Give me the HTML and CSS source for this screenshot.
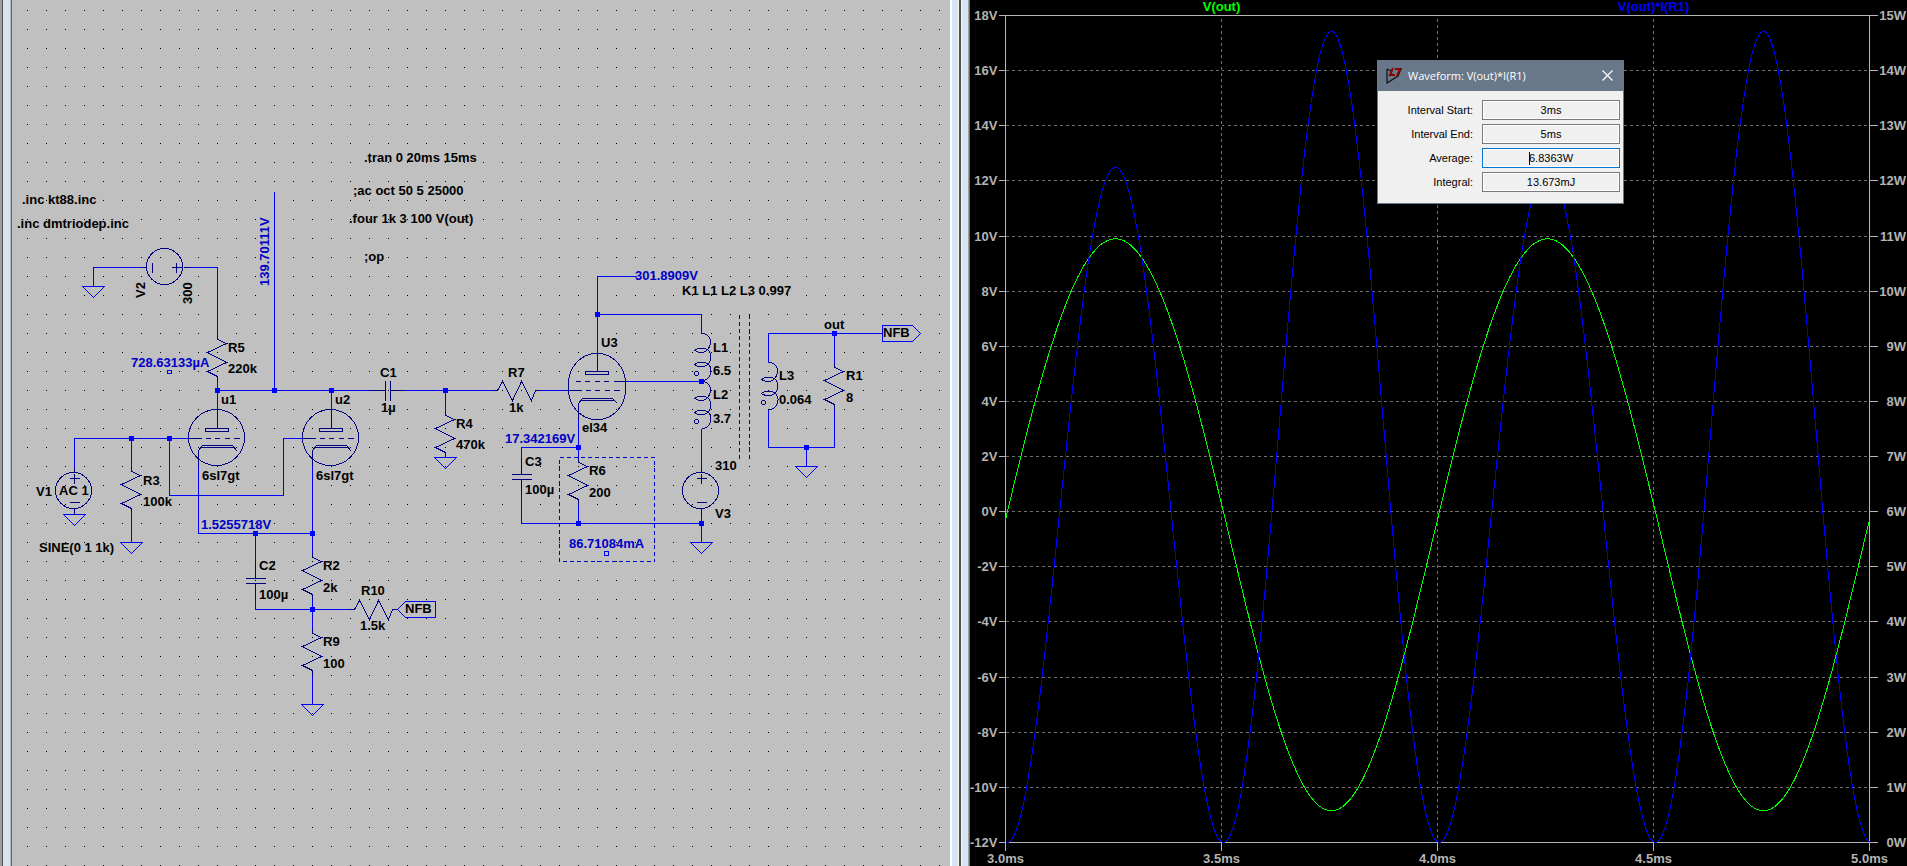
FILE: index.html
```html
<!DOCTYPE html>
<html lang="en">
<head>
  <meta charset="utf-8">
  <title>LTspice - push pull driver</title>
  <link rel="stylesheet" href="styles.css">
</head>
<body>
<main class="workspace">
  <section class="window" aria-label="Schematic">
    <div class="edge edge-left"></div>
    <svg class="schematic">
      <defs>
        <pattern id="dots" x="15" y="10" width="19" height="19" patternUnits="userSpaceOnUse">
          <rect width="1" height="1" fill="#000"/>
        </pattern>
        <g id="res"><path d="M0 -5V0L9 4L-10 13L9 23L-10 32L0 37V42"/></g>
        <g id="resh"><path d="M-5 0H0L5 -9L15 10L24 -9L34 10L38 0H43"/></g>
        <g id="gnd"><path d="M-11 0H11L0 11Z"/></g>
        <g id="cap"><path d="M0 -17V0M-10 0H10M-10 5H10M0 5V20"/></g>
        <g id="ind">
          <path d="M0 0C6 0 9 4 9 9C9 14 5 19 0 19C-3 19 -5 18 -7 17C-4 14 4 14 7 17C10 20 10 28 6 31C3 34 -3 34 -7 31C-4 28 4 28 7 31C12 36 9 47 0 47"/>
          <circle cx="-5" cy="40" r="2"/>
        </g>
        <g id="src">
          <circle cx="-1" r="18"/>
          <path d="M0 -24V-19M0 18V24M-5 -12H5M0 -17V-7M-5 12H5"/>
        </g>
        <g id="triode">
          <circle cx="-1" r="28"/>
          <path d="M0 -28V-9M-12 -9H11V-6H-12Z"/>
          <path d="M-29 1H-16M-12 1H-7M-3 1H2M7 1H12M16 1H22"/>
          <path d="M-19 28V13L-15 8H15L20 14M-17 10H17"/>
        </g>
      </defs>
      <rect width="100%" height="100%" fill="url(#dots)"/>

      <!-- window starts 12px in, half pixel keeps 1px lines sharp -->
      <g transform="translate(-11.5 .5)">
        <g class="wire">
          <path d="M93 286V267H142M188 267H217V334M274 191V390M217 381V409M217 390H369M405 390H492M540 390H568M331 390V409"/>
          <path d="M74 466V438H188M131 438V466M131 513V542M169 438V495H283V438H302"/>
          <path d="M198 465V533H312M312 465V552M255 533V561M255 598V609H350M312 599V628M312 675V704"/>
          <path d="M445 390V410M597 353V276H636M597 314H701V333M626 381H701M701 428V466M578 418V457"/>
          <path d="M578 447H521V457M521 494V523H701M578 504V523M701 514V542"/>
          <path d="M768 362V333H882M834 333V362M834 409V447H768V409M806 447V466"/>
          <path d="M397 609L405 601H435V617H405ZM882 325H912L920 333L912 341H882Z"/>
          <rect x="167" y="370" width="4" height="3"/>
          <rect x="604" y="551" width="4" height="4"/>
          <use href="#gnd" x="93" y="286"/>
          <use href="#gnd" x="74" y="514"/>
          <use href="#gnd" x="131" y="542"/>
          <use href="#gnd" x="312" y="704"/>
          <use href="#gnd" x="445" y="457"/>
          <use href="#gnd" x="701" y="542"/>
          <use href="#gnd" x="806" y="466"/>
        </g>

        <g class="part">
          <use href="#src" transform="translate(164 267) rotate(90)"/>
          <use href="#src" x="74" y="490"/>
          <use href="#src" x="701" y="490"/>
          <use href="#res" x="217" y="339"/>
          <use href="#res" x="131" y="471"/>
          <use href="#res" x="312" y="557"/>
          <use href="#res" x="312" y="633"/>
          <use href="#res" x="445" y="415"/>
          <use href="#res" x="578" y="462"/>
          <use href="#res" x="834" y="367"/>
          <use href="#resh" x="497" y="390"/>
          <use href="#resh" x="354" y="609"/>
          <use href="#cap" x="255" y="578"/>
          <use href="#cap" x="521" y="474"/>
          <use href="#cap" transform="translate(385 390) rotate(-90)"/>
          <use href="#ind" x="701" y="333"/>
          <use href="#ind" x="701" y="381"/>
          <use href="#ind" x="768" y="362"/>
          <use href="#triode" x="217" y="437"/>
          <use href="#triode" x="331" y="437"/>
          <!-- U3 pentode -->
          <rect x="568" y="353" width="57" height="66" rx="28" ry="30"/>
          <path d="M597 353V371M585 371H608V374H585Z"/>
          <path d="M575 381H580M584 381H589M594 381H599M603 381H608M613 381H626"/>
          <path d="M568 390H581M585 390H590M594 390H599M604 390H609M613 390H619"/>
          <path d="M578 419V403L582 398H612L617 403M580 400H614"/>
        </g>

        <g class="dashed">
          <rect x="559" y="457" width="95" height="104"/>
          <path d="M739 314V458M749 314V458"/>
        </g>

        <g class="node">
          <path d="M217 390h0M274 390h0M331 390h0M445 390h0M131 438h0M169 438h0M255 533h0M312 533h0M312 609h0"/>
          <path d="M597 314h0M701 381h0M578 447h0M578 523h0M701 523h0M834 333h0M806 447h0"/>
        </g>
      </g>

      <g transform="translate(-12 -1)">
        <g class="label">
          <text x="22" y="205">.inc kt88.inc</text>
          <text x="17" y="229">.inc dmtriodep.inc</text>
          <text x="364" y="163">.tran 0 20ms 15ms</text>
          <text x="353" y="196">;ac oct 50 5 25000</text>
          <text x="349" y="224">.four 1k 3 100 V(out)</text>
          <text x="364" y="262">;op</text>
          <text transform="translate(145 299) rotate(-90)">V2</text>
          <text transform="translate(192 305) rotate(-90)">300</text>
          <text x="228" y="353">R5</text>
          <text x="228" y="374">220k</text>
          <text x="221" y="405">u1</text>
          <text x="202" y="481">6sl7gt</text>
          <text x="335" y="405">u2</text>
          <text x="316" y="481">6sl7gt</text>
          <text x="36" y="497">V1</text>
          <text x="59" y="496">AC 1</text>
          <text x="143" y="486">R3</text>
          <text x="143" y="507">100k</text>
          <text x="39" y="553">SINE(0 1 1k)</text>
          <text x="259" y="571">C2</text>
          <text x="259" y="600">100µ</text>
          <text x="323" y="571">R2</text>
          <text x="323" y="593">2k</text>
          <text x="361" y="596">R10</text>
          <text x="360" y="631">1.5k</text>
          <text x="405" y="614">NFB</text>
          <text x="323" y="647">R9</text>
          <text x="323" y="669">100</text>
          <text x="380" y="378">C1</text>
          <text x="381" y="413">1µ</text>
          <text x="508" y="378">R7</text>
          <text x="509" y="413">1k</text>
          <text x="456" y="429">R4</text>
          <text x="456" y="450">470k</text>
          <text x="525" y="467">C3</text>
          <text x="525" y="495">100µ</text>
          <text x="601" y="348">U3</text>
          <text x="582" y="433">el34</text>
          <text x="589" y="476">R6</text>
          <text x="589" y="498">200</text>
          <text x="682" y="296">K1 L1 L2 L3 0.997</text>
          <text x="713" y="353">L1</text>
          <text x="713" y="376">6.5</text>
          <text x="713" y="400">L2</text>
          <text x="713" y="424">3.7</text>
          <text x="715" y="471">310</text>
          <text x="715" y="519">V3</text>
          <text x="779" y="381">L3</text>
          <text x="779" y="405">0.064</text>
          <text x="824" y="330">out</text>
          <text x="883" y="338">NFB</text>
          <text x="846" y="381">R1</text>
          <text x="846" y="403">8</text>
        </g>
        <g class="probe">
          <text transform="translate(269 287) rotate(-90)">139.70111V</text>
          <text x="131" y="368">728.63133µA</text>
          <text x="201" y="530">1.5255718V</text>
          <text x="505" y="444">17.342169V</text>
          <text x="635" y="281">301.8909V</text>
          <text x="569" y="549">86.71084mA</text>
        </g>
      </g>
    </svg>
    <div class="edge edge-right"></div>
  </section>

  <section class="window" aria-label="Waveforms">
    <div class="edge edge-plot"></div>
    <div class="plot">
      <svg class="chart" id="chart"></svg>

      <form class="dialog">
        <header class="titlebar">
          <svg class="logo" width="17" height="17" viewBox="0 0 17 17">
            <path d="M1 2V16L12 9L15 2M1 2L5 4" fill="none" stroke="#111" stroke-width="1.2"/>
            <path d="M7 1L4 8H9M9 2H16M14 2L11 9" fill="none" stroke="#8c0000" stroke-width="2"/>
          </svg>
          <h1 class="caption">Waveform: V(out)*I(R1)</h1>
          <button class="close" type="button" aria-label="Close">
            <svg width="11" height="11" viewBox="0 0 11 11"><path d="M.5 .5L10.5 10.5M10.5 .5L.5 10.5" stroke="#fff" stroke-width="1.2"/></svg>
          </button>
        </header>
        <div class="fields">
          <label for="start">Interval Start:</label><input id="start" value="3ms" readonly>
          <label for="end">Interval End:</label><input id="end" value="5ms" readonly>
          <label for="average">Average:</label><input id="average" class="active" value="6.8363W" readonly>
          <label for="integral">Integral:</label><input id="integral" value="13.673mJ" readonly>
        </div>
      </form>
    </div>
  </section>
</main>
<script src="plot.js"></script>
</body>
</html>
```
FILE: styles.css
```css
body { margin: 0; background: #c0c0c0; font-family: "Liberation Sans", Arial, sans-serif; font-size: 13px; }

.workspace {
  display: grid;
  grid-template-columns: 961fr 946fr;
  height: 100vh;
  overflow: hidden;
}

.window { display: flex; min-width: 0; min-height: 0; }

.edge { flex: none; }
.edge-left {
  width: 12px;
  background: linear-gradient(to right, #a0a0a0 2px, #505050 2px 3px, #d7e4f2 3px 10px, #b4b4b4 10px 11px, #696969 11px);
}
.edge-right {
  width: 11px;
  background: linear-gradient(to right, #fff 2px, #d7e4f2 2px 8px, #f4f4f4 8px 9px, #505050 9px);
}
.edge-plot {
  width: 9px;
  background: linear-gradient(to right, #f4f4f4 1px, #d7e4f2 1px 7px, #a0a0a0 7px 8px, #696969 8px);
}

.schematic { flex: 1; min-width: 0; height: 100%; background: #c0c0c0; }
.schematic g { shape-rendering: crispEdges; }
.schematic text, .chart text { font-weight: bold; font-size: 13px; }
.wire { fill: none; stroke: #00f; }
.part { fill: none; stroke: #000080; }
.dashed { fill: none; stroke: #0000c8; stroke-dasharray: 4 3; }
.node { stroke: #00f; stroke-width: 5; stroke-linecap: square; }
.label { fill: #000; }
.probe { fill: #0000c8; }

.plot { position: relative; flex: 1; min-width: 0; background: #000; }
.chart { display: block; width: 100%; height: 100%; }
.axis { fill: none; stroke: #b4b4b4; shape-rendering: crispEdges; }
.grid { fill: none; stroke: #6e6e6e; stroke-dasharray: 3 3; shape-rendering: crispEdges; }
.trace { fill: none; shape-rendering: crispEdges; }
.tick { fill: #b4b4b4; }
.vout { stroke: #0f0; }
.power { stroke: #00f; }
.vout-name { fill: #0f0; }
.power-name { fill: #00f; }
.middle { text-anchor: middle; }
.end { text-anchor: end; }

/* floats over the plot */
.dialog {
  position: absolute;
  top: 60px;
  right: 283px;
  box-sizing: border-box;
  width: 247px;
  border: 1px solid #69778a;
  background: #f0f0f0;
  font-size: 11px;
}
.titlebar {
  display: flex;
  align-items: center;
  gap: 5px;
  height: 28px;
  padding: 0 10px 2px 8px;
  background: #69778a;
}
.caption {
  flex: 1;
  margin: 0;
  color: #fff;
  font-family: "Open Sans", sans-serif;
  font-size: 11px;
  font-weight: normal;
  white-space: nowrap;
}
.close { display: flex; padding: 0; border: 0; background: none; }
.fields {
  display: grid;
  grid-template-columns: 1fr 138px;
  align-items: center;
  gap: 4px 9px;
  padding: 9px 3px 11px;
}
.fields label { text-align: right; }
.fields input {
  box-sizing: border-box;
  width: 100%;
  height: 20px;
  padding: 0;
  border: 1px solid #7a7a7a;
  outline: 0;
  background: #f0f0f0;
  box-shadow: inset 0 0 0 1px #fff;
  font: inherit;
  text-align: center;
}
.fields .active {
  border-color: #0078d7;
  background: linear-gradient(#000, #000) 46px 3px / 1px 13px no-repeat #f0f0f0;
}
```
FILE: plot.js
```js
var chart = document.getElementById('chart');

function line(cls, d) {
  return '<path class="' + cls + '" d="' + d + '"/>';
}

function text(cls, x, y, s) {
  return '<text class="' + cls + '" x="' + x + '" y="' + y + '">' + s + '</text>';
}

// output voltage, t in ms, 1 kHz with some second harmonic
function vout(t) {
  var a = 2 * Math.PI * (t - 0.0044);
  return 10.375 * Math.sin(a) - 0.475 * (1 - Math.cos(2 * a)) / 2;
}

function draw() {
  var w = chart.clientWidth, h = chart.clientHeight;
  var x0 = 35.5, x1 = w - 37.5, y0 = 15.5, y1 = h - 23.5;
  var out = '', grid = '', axis = '', i, x, y, t, v;

  for (i = 0; i <= 15; i++) {
    y = Math.round(y0 + (y1 - y0) * i / 15 - 0.5) + 0.5;
    if (i > 0 && i < 15) grid += 'M' + x0 + ' ' + y + 'H' + x1;
    axis += 'M' + (x0 - 7) + ' ' + y + 'H' + x0 + 'M' + x1 + ' ' + y + 'H' + (x1 + 8);
    out += text('tick end', x0 - 8, y + 4, (18 - 2 * i) + 'V');
    out += text('tick end', w - 1, y + 4, (15 - i) + 'W');
  }
  for (i = 0; i <= 4; i++) {
    x = Math.round(x0 + (x1 - x0) * i / 4 - 0.5) + 0.5;
    if (i > 0 && i < 4) grid += 'M' + x + ' ' + (y0 + 3) + 'V' + y1;
    axis += 'M' + x + ' ' + y1 + 'v8';
    out += text('tick middle', x, y1 + 20, (3 + i / 2).toFixed(1) + 'ms');
  }
  axis += 'M' + x0 + ' ' + y0 + 'H' + x1 + 'V' + y1 + 'H' + x0 + 'Z';

  var volts = '', watts = '';
  for (i = 0; i <= 300; i++) {
    t = 2 * i / 300;
    v = vout(t);
    x = (x0 + (x1 - x0) * i / 300).toFixed(1);
    volts += (i ? 'L' : 'M') + x + ' ' + (y0 + (y1 - y0) * (18 - v) / 30).toFixed(1);
    watts += (i ? 'L' : 'M') + x + ' ' + (y1 - (y1 - y0) * v * v / 8 / 15).toFixed(1);
  }

  out += text('vout-name middle', x0 + (x1 - x0) / 4, 11, 'V(out)');
  out += text('power-name middle', x0 + (x1 - x0) * 3 / 4, 11, 'V(out)*I(R1)');
  chart.innerHTML = line('grid', grid) + line('axis', axis) + out +
    line('trace vout', volts) + line('trace power', watts);
}

draw();
window.addEventListener('resize', draw);
```
